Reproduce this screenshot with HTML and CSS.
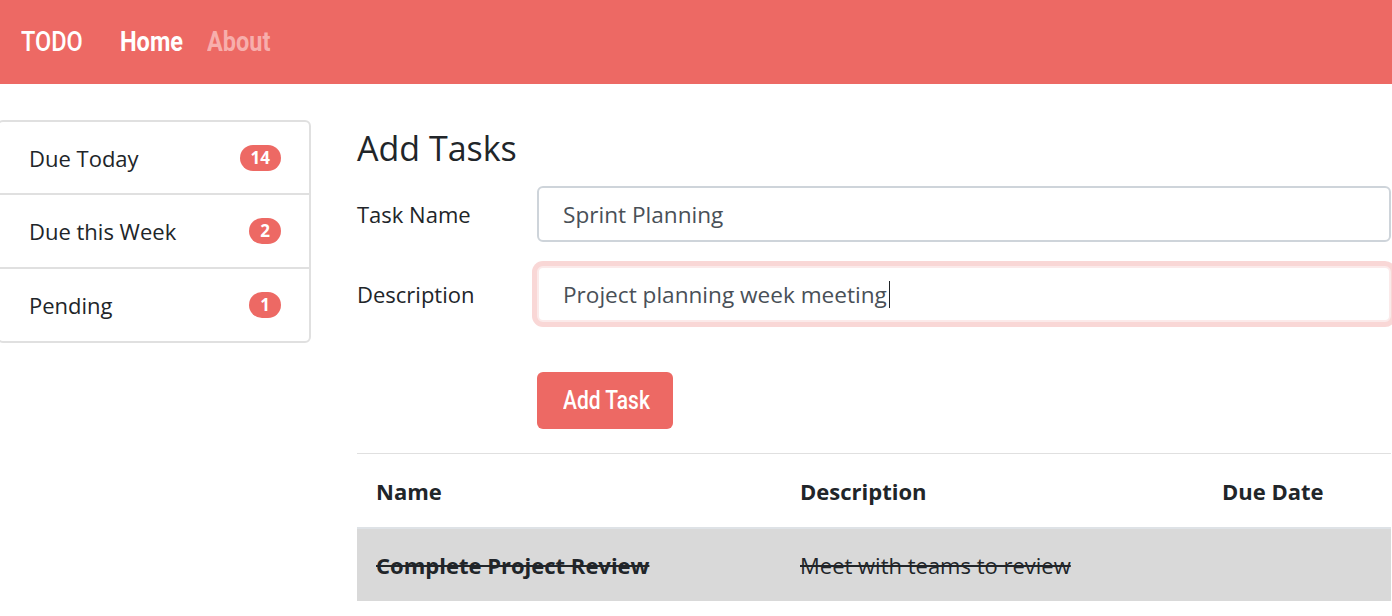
FILE: index.html
```html
<!DOCTYPE html>
<html lang="en">
<head>
<meta charset="utf-8">
<title>TODO</title>
<link rel="stylesheet" href="styles.css">
</head>
<body>
<nav class="navbar">
  <a class="brand" href="#"><span class="narrow">TODO</span></a>
  <a class="nav-link active" href="#"><span class="narrow">Home</span></a>
  <a class="nav-link muted" href="#"><span class="narrow">About</span></a>
</nav>
<div class="page">
  <aside class="sidebar">
    <ul class="list-group">
      <li class="list-item"><span>Due Today</span><span class="badge">14</span></li>
      <li class="list-item"><span>Due this Week</span><span class="badge">2</span></li>
      <li class="list-item"><span>Pending</span><span class="badge">1</span></li>
    </ul>
  </aside>
  <main class="main">
    <h3 class="title">Add Tasks</h3>
    <form class="form">
      <div class="form-row">
        <label class="form-label" for="name">Task Name</label>
        <input class="form-control" id="name" type="text" value="Sprint Planning">
      </div>
      <div class="form-row">
        <label class="form-label" for="desc">Description</label>
        <div class="input-wrap">
          <input class="form-control focused" id="desc" type="text" value="Project planning week meeting">
          <span class="caret"></span>
        </div>
      </div>
      <div class="form-row button-row">
        <span class="form-label"></span>
        <button class="btn" type="button"><span class="narrow">Add Task</span></button>
      </div>
    </form>
    <hr class="divider">
    <table class="table">
      <thead>
        <tr><th class="col-name">Name</th><th class="col-desc">Description</th><th class="col-date">Due Date</th></tr>
      </thead>
      <tbody>
        <tr class="done"><td class="bold">Complete Project Review</td><td>Meet with teams to review</td><td></td></tr>
      </tbody>
    </table>
  </main>
</div>
</body>
</html>
```
FILE: styles.css
```css
html, body {
  margin: 0;
  padding: 0;
  overflow: hidden;
}
body {
  font-family: "Open Sans", "Noto Sans", sans-serif;
  font-size: 22px;
  line-height: 36px;
  color: #212529;
  background: #fff;
}
.narrow {
  display: inline-block;
  transform: scaleX(0.84);
  transform-origin: left center;
  white-space: nowrap;
}
.navbar {
  height: 84px;
  box-sizing: border-box;
  background: #ed6964;
  display: flex;
  align-items: center;
  padding: 0 0 0 21px;
  font-family: "Roboto", sans-serif;
  font-weight: 700;
}
.navbar a {
  text-decoration: none;
  font-size: 28px;
  display: block;
  overflow: visible;
}
.brand {
  color: #fff;
  width: 63px;
  margin-right: 24px;
  font-weight: 500;
}
.nav-link {
  width: 63px;
  padding: 0 12px;
}
.nav-link.active { color: #fff; }
.nav-link.muted { color: #f7aeac; }

.page {
  display: flex;
  padding-top: 36px;
}
.sidebar {
  width: 314px;
  margin-left: -3px;
  flex: none;
}
.list-group {
  list-style: none;
  margin: 0;
  padding: 0;
  border: 2px solid #e0e0e0;
  border-radius: 6px;
}
.list-item {
  display: flex;
  align-items: center;
  justify-content: space-between;
  height: 72px;
  padding: 0 28px 0 30px;
  border-top: 2px solid #e0e0e0;
  font-size: 22px;
}
.list-item:first-child { border-top: 0; height: 71px; }
.badge {
  background: #ed6964;
  color: #fff;
  font-weight: 700;
  font-size: 17px;
  line-height: 26px;
  height: 26px;
  padding: 0 11px;
  border-radius: 14px;
  min-width: 10px;
  text-align: center;
}
.main {
  margin-left: 46px;
  width: 1034px;
  flex: none;
}
.title {
  margin: 0;
  font-weight: 400;
  font-size: 34px;
  line-height: 48px;
  padding-top: 4px;
}
.form {
  margin-top: 14px;
}
.form-row {
  display: flex;
  align-items: center;
  margin-bottom: 24px;
}
.form-label {
  width: 180px;
  flex: none;
}
.input-wrap {
  flex: 1;
  display: flex;
  position: relative;
}
.form-control {
  flex: 1;
  height: 56px;
  box-sizing: border-box;
  border: 2px solid #ced4da;
  border-radius: 6px;
  padding: 0 24px;
  font-family: inherit;
  font-size: 22.6px;
  color: #495057;
  background: #fff;
  outline: none;
  margin: 0;
}
.form-control.focused {
  border-color: #fbeaea;
  box-shadow: 0 0 0 5px #f9d7d6;
}
.caret {
  position: absolute;
  left: 352px;
  top: 15px;
  width: 1px;
  height: 27px;
  background: #212529;
}
.button-row {
  margin-top: 50px;
  margin-bottom: 0;
}
.btn {
  width: 136px;
  height: 57px;
  border: 0;
  border-radius: 6px;
  background: #ed6964;
  color: #fff;
  font-family: "Roboto", sans-serif;
  font-weight: 500;
  font-size: 25px;
  padding: 0 0 0 26px;
  text-align: left;
}
.divider {
  margin: 24px 0 0 0;
  border: 0;
  border-top: 1px solid #e0e0e0;
  height: 0;
}
.table {
  width: 100%;
  border-collapse: collapse;
  table-layout: fixed;
}
.table th, .table td {
  text-align: left;
  padding: 18px 19px;
  line-height: 36px;
  vertical-align: middle;
}
.table th {
  font-weight: 700;
  padding-top: 19px;
  border-bottom: 2px solid #dee2e6;
}
.col-name { width: 386px; }
.col-desc { width: 384px; }
.done td {
  background: #d9d9d9;
  text-decoration: line-through;
}
.bold { font-weight: 700; }
```
